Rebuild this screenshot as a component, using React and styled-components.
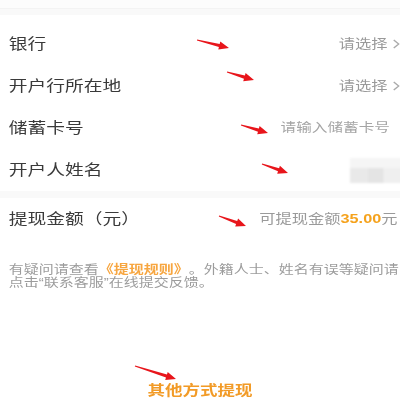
import React from 'react';
import styled, { createGlobalStyle } from 'styled-components';

const Global = createGlobalStyle`
  html, body { margin: 0; padding: 0; background: #fff; }
  body { font-family: "Liberation Sans", "Noto Sans CJK SC", sans-serif; }
`;

const Frame = styled.div`
  position: relative;
  width: 400px;
  height: 407px;
  overflow: hidden;
  background: #fff;
`;

const Page = styled.div`
  width: 320px;
  transform: scaleX(1.25);
  transform-origin: 0 0;
  display: flex;
  flex-direction: column;
`;

const TopBar = styled.div`
  height: 8px;
  background: #fcfcfc;
  border-bottom: 1px solid #f3f3f3;
`;

const Gap = styled.div`
  height: ${(p) => p.$h}px;
  background: #f9f9f9;
`;

const Section = styled.div`
  display: flex;
  flex-direction: column;
  padding-top: ${(p) => p.$pt || 0}px;
`;

const Row = styled.div`
  height: 42px;
  display: flex;
  align-items: center;
  justify-content: space-between;
  padding-left: 7px;
`;

const Label = styled.span`
  font-size: 15px;
  line-height: 20px;
  color: #3a3a3a;
  white-space: nowrap;
`;

const Value = styled.span`
  display: flex;
  align-items: center;
  gap: 3px;
  font-size: ${(p) => p.$fs || 13}px;
  line-height: 18px;
  color: ${(p) => p.$c || '#9a9a9a'};
  margin-right: ${(p) => p.$mr || 0}px;
  white-space: nowrap;
`;

const Amount = styled.b`
  color: #f5a21c;
  font-weight: bold;
`;

const Mosaic = styled.div`
  width: 42px;
  height: 25px;
  display: flex;
  align-items: flex-end;
  background: #f5f5f5;
  filter: blur(1px);
  margin-right: -2px;
`;

const Cell = styled.div`
  width: ${(p) => p.$w}px;
  height: 15px;
  background: ${(p) => p.$c};
`;

const Note = styled.div`
  display: flex;
  flex-direction: column;
  padding: 24px 0 0 7px;
  font-size: 12px;
  color: #9c9c9c;
`;

const NoteLine = styled.div`
  height: 13px;
  line-height: 13px;
  white-space: nowrap;
`;

const Link = styled.span`
  display: inline-block;
  line-height: 13px;
  color: #f7a640;
  font-weight: bold;
`;

const Other = styled.div`
  margin-top: 90px;
  text-align: center;
  font-size: 14px;
  line-height: 20px;
  font-weight: bold;
  color: #f29b27;
`;

const Overlay = styled.svg`
  position: absolute;
  left: 0;
  top: 0;
  pointer-events: none;
`;

const Chevron = () => (
  <svg width="7" height="10" viewBox="0 0 7 10">
    <polyline points="2,1 6,5 2,9" fill="none" stroke="#aaa" strokeWidth="1.1" />
  </svg>
);

function arrowPoints(x1, y1, x2, y2) {
  const dx = x2 - x1;
  const dy = y2 - y1;
  const L = Math.hypot(dx, dy);
  const ux = dx / L;
  const uy = dy / L;
  const nx = -uy;
  const ny = ux;
  const head = 10;
  const hw = 4.2;
  const bx = x2 - ux * head;
  const by = y2 - uy * head;
  const t0 = 0.5;
  const t1 = 1.6;
  const pts = [
    [x1 + nx * t0, y1 + ny * t0],
    [bx + nx * t1, by + ny * t1],
    [bx + nx * hw, by + ny * hw],
    [x2, y2],
    [bx - nx * hw, by - ny * hw],
    [bx - nx * t1, by - ny * t1],
    [x1 - nx * t0, y1 - ny * t0],
  ];
  return pts.map((p) => p.map((v) => v.toFixed(1)).join(',')).join(' ');
}

const arrows = [
  [197, 40, 229, 48],
  [227, 72, 254, 80],
  [241, 125, 268, 133],
  [262, 164, 288, 173],
  [219, 216, 246, 226],
  [135, 366, 176, 379],
];

export default function App() {
  return (
    <>
      <Global />
      <Frame>
        <Page>
          <TopBar />
          <Gap $h={6} />
          <Section $pt={8}>
            <Row>
              <Label>银行</Label>
              <Value>
                请选择
                <Chevron />
              </Value>
            </Row>
            <Row>
              <Label>开户行所在地</Label>
              <Value>
                请选择
                <Chevron />
              </Value>
            </Row>
            <Row>
              <Label>储蓄卡号</Label>
              <Value $fs={12.5} $c="#a5a5a5" $mr={8}>请输入储蓄卡号</Value>
            </Row>
            <Row>
              <Label>开户人姓名</Label>
              <Mosaic>
                <Cell $w={14} $c="#e9e9e9" />
                <Cell $w={13} $c="#e4e4e4" />
                <Cell $w={15} $c="#efefef" />
              </Mosaic>
            </Row>
          </Section>
          <Gap $h={7} />
          <Section>
            <Row>
              <Label>提现金额（元）</Label>
              <Value $mr={2}>
                <span>
                  可提现金额<Amount>35.00</Amount>元
                </span>
              </Value>
            </Row>
          </Section>
          <Note>
            <NoteLine>
              有疑问请查看<Link>《提现规则》</Link>。外籍人士、姓名有误等疑问请
            </NoteLine>
            <NoteLine>点击“联系客服”在线提交反馈。</NoteLine>
          </Note>
          <Other>其他方式提现</Other>
        </Page>
        <Overlay width="400" height="407" viewBox="0 0 400 407">
          {arrows.map((a, i) => (
            <polygon key={i} points={arrowPoints(...a)} fill="#e8151b" />
          ))}
        </Overlay>
      </Frame>
    </>
  );
}
